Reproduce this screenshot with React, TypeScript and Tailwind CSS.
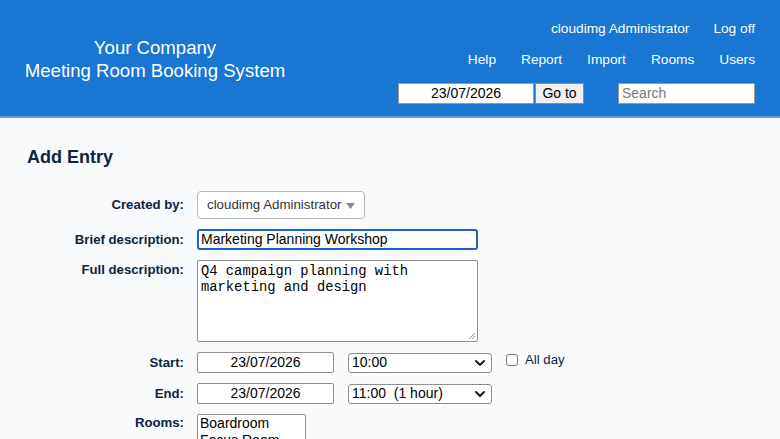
import React from "react";

const Chevron = () => (
  <svg width="10" height="7" viewBox="0 0 10 7" className="absolute right-[6px] top-1/2 -translate-y-1/2">
    <path d="M1 1.5 L5 5.5 L9 1.5" fill="none" stroke="#111" strokeWidth="1.8" strokeLinecap="round" strokeLinejoin="round" />
  </svg>
);

export default function App() {
  const font = { fontFamily: '"Liberation Sans", Arial, sans-serif' };
  return (
    <div className="w-[780px] h-[439px] overflow-hidden bg-[#f8fafc]" style={font}>
      <header className="h-[118px] bg-[#1976d3] border-b-[2px] border-b-[#5a9ee6] flex text-white">
        <div className="w-[310px] flex flex-col items-center justify-center pt-[2px] text-[18.6px] leading-[23px]">
          <div>Your Company</div>
          <div>Meeting Room Booking System</div>
        </div>
        <div className="flex-1 flex flex-col items-end pr-[25px] pt-[20px] text-[13.7px]">
          <div className="flex gap-[24px] h-[18px] items-center">
            <span>cloudimg Administrator</span>
            <span>Log off</span>
          </div>
          <div className="flex gap-[25px] h-[18px] items-center mt-[13px]">
            <span>Help</span>
            <span>Report</span>
            <span>Import</span>
            <span>Rooms</span>
            <span>Users</span>
          </div>
          <div className="flex items-center mt-[14px]">
            <div className="w-[136px] h-[21px] bg-white border border-[#9a9a9a] text-black text-[14px] flex items-center justify-center">23/07/2026</div>
            <div className="ml-[1px] w-[49px] h-[21px] bg-[#efefef] border border-[#8a8a8a] text-black text-[14px] flex items-center justify-center">Go to</div>
            <div className="ml-[34px] w-[137px] h-[21px] bg-white border border-[#9a9a9a] text-[#7a7a7a] text-[14px] flex items-center pl-[3px]">Search</div>
          </div>
        </div>
      </header>
      <main className="pt-[28px]">
        <h1 className="pl-[27px] text-[18px] font-bold text-[#0f2540] leading-[22px]">Add Entry</h1>
        <div className="mt-[23px] grid grid-cols-[184px_1fr] gap-x-[13px] text-[13.2px] text-[#0f2540]">
          <div className="font-bold text-right self-center">Created by:</div>
          <div>
            <div className="relative w-[168px] h-[28px] bg-white border border-[#b8b8b8] rounded-[4px] flex items-center pl-[9px] text-[13.3px] text-[#333]">
              cloudimg Administrator
              <svg width="9" height="6" viewBox="0 0 9 6" className="absolute right-[9px] top-[11px]"><path d="M0 0 L9 0 L4.5 6 Z" fill="#8a8a8a" /></svg>
            </div>
          </div>

          <div className="font-bold text-right self-center mt-[10px]">Brief description:</div>
          <div className="mt-[10px]">
            <div className="w-[281px] h-[21px] bg-white border-[2px] border-[#1a64c8] rounded-[3px] flex items-center pl-[2px] text-[14px] text-black">Marketing Planning Workshop</div>
          </div>

          <div className="font-bold text-right mt-[12px] leading-[16px]">Full description:</div>
          <div className="mt-[10px]">
            <div className="relative w-[281px] h-[82px] bg-white border border-[#8f8f8f] rounded-[2px] px-[3px] pt-[3px] text-[13.8px] leading-[16px] text-black" style={{ fontFamily: '"Liberation Mono", "Courier New", monospace' }}>
              Q4 campaign planning with<br />marketing and design
              <svg width="8" height="8" viewBox="0 0 8 8" className="absolute right-[1px] bottom-[1px]"><path d="M7 1 L1 7 M7 4 L4 7" stroke="#999" strokeWidth="1" /></svg>
            </div>
          </div>

          <div className="font-bold text-right self-center mt-[10px]">Start:</div>
          <div className="mt-[10px] flex items-center">
            <div className="w-[137px] h-[21px] bg-white border border-[#8f8f8f] rounded-[2px] flex items-center justify-center text-[14px] text-black">23/07/2026</div>
            <div className="relative ml-[14px] w-[144px] h-[20px] bg-white border border-[#8f8f8f] rounded-[3px] flex items-center pl-[3px] text-[14px] text-black">10:00<Chevron /></div>
            <div className="ml-[14px] w-[12px] h-[12px] bg-white border border-[#777] rounded-[3px] -mt-[6px]"></div>
            <span className="ml-[7px] text-[13.2px] text-[#0f2540] -mt-[6px]">All day</span>
          </div>

          <div className="font-bold text-right self-center mt-[10px]">End:</div>
          <div className="mt-[10px] flex items-center">
            <div className="w-[137px] h-[21px] bg-white border border-[#8f8f8f] rounded-[2px] flex items-center justify-center text-[14px] text-black">23/07/2026</div>
            <div className="relative ml-[14px] w-[144px] h-[20px] bg-white border border-[#8f8f8f] rounded-[3px] flex items-center pl-[3px] text-[14px] text-black whitespace-pre">11:00  (1 hour)<Chevron /></div>
          </div>

          <div className="font-bold text-right mt-[11px] leading-[16px]">Rooms:</div>
          <div className="mt-[10px]">
            <div className="w-[109px] h-[60px] bg-white border border-[#8f8f8f] rounded-[2px] pl-[2px] text-[14px] leading-[17px] text-black overflow-hidden">
              <div>Boardroom</div>
              <div>Focus Room</div>
              <div>Meeting Room 1</div>
            </div>
          </div>
        </div>
      </main>
    </div>
  );
}
